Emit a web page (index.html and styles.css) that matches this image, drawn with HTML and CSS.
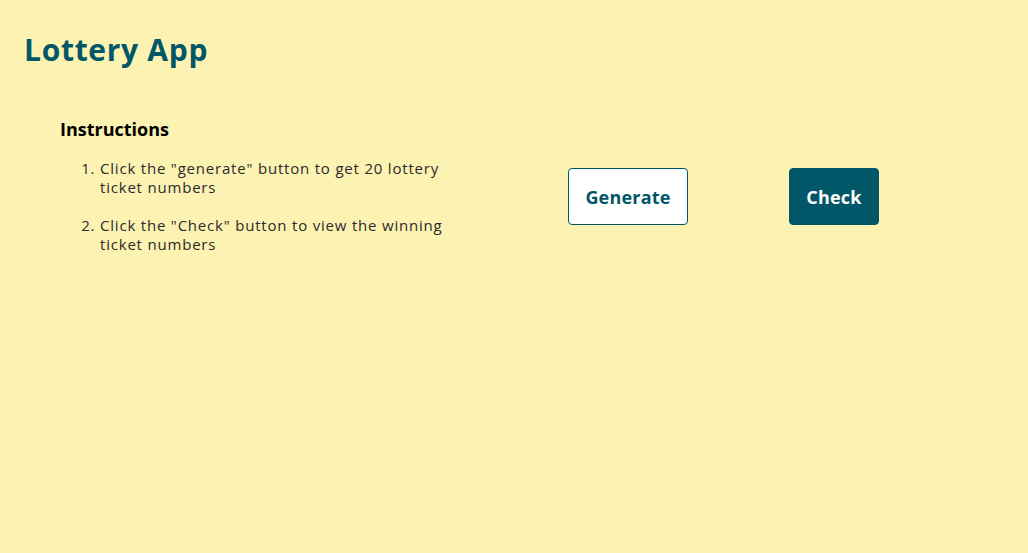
FILE: index.html
```html
<!DOCTYPE html>
<html lang="en">
<head>
<meta charset="utf-8">
<title>Lottery App</title>
<link rel="stylesheet" href="styles.css">
</head>
<body>
<header class="header">
  <h1 class="title">Lottery App</h1>
</header>
<main class="main">
  <section class="instructions">
    <h2 class="instructions-title">Instructions</h2>
    <ol class="steps">
      <li>Click the "generate" button to get 20 lottery ticket numbers</li>
      <li>Click the "Check" button to view the winning ticket numbers</li>
    </ol>
  </section>
  <div class="actions">
    <button class="btn btn-outline">Generate</button>
    <button class="btn btn-solid">Check</button>
  </div>
</main>
</body>
</html>
```

FILE: styles.css
```css
* { box-sizing: border-box; }
html, body { height: 100%; }
body {
  margin: 0;
  background: #fcf2b2;
  font-family: "Open Sans", "Noto Sans", sans-serif;
  color: #2b2b2b;
}
.header {
  padding: 30px 24px 0;
}
.title {
  margin: 0;
  font-size: 30px;
  line-height: 40px;
  font-weight: 700;
  letter-spacing: 0.7px;
  color: #015668;
}
.main {
  display: flex;
  align-items: flex-start;
  padding: 47px 0 0 60px;
}
.instructions {
  width: 400px;
  flex: none;
}
.instructions-title {
  margin: 0;
  font-size: 18px;
  line-height: 24px;
  font-weight: 700;
  color: #000;
}
.steps {
  margin: 18px 0 0;
  padding-left: 40px;
  font-size: 15px;
  line-height: 19px;
  letter-spacing: 0.8px;
}
.steps li + li { margin-top: 19px; }
.actions {
  display: flex;
  gap: 101px;
  margin: 51px 0 0 108px;
}
.btn {
  height: 57px;
  border-radius: 4px;
  font-family: inherit;
  font-size: 18px;
  font-weight: 700;
  letter-spacing: 0.2px;
  cursor: pointer;
}
.btn-outline {
  width: 120px;
  background: #fff;
  color: #015668;
  border: 1px solid #015668;
}
.btn-solid {
  width: 90px;
  background: #015668;
  color: #fff;
  border: 1px solid #015668;
}
```
